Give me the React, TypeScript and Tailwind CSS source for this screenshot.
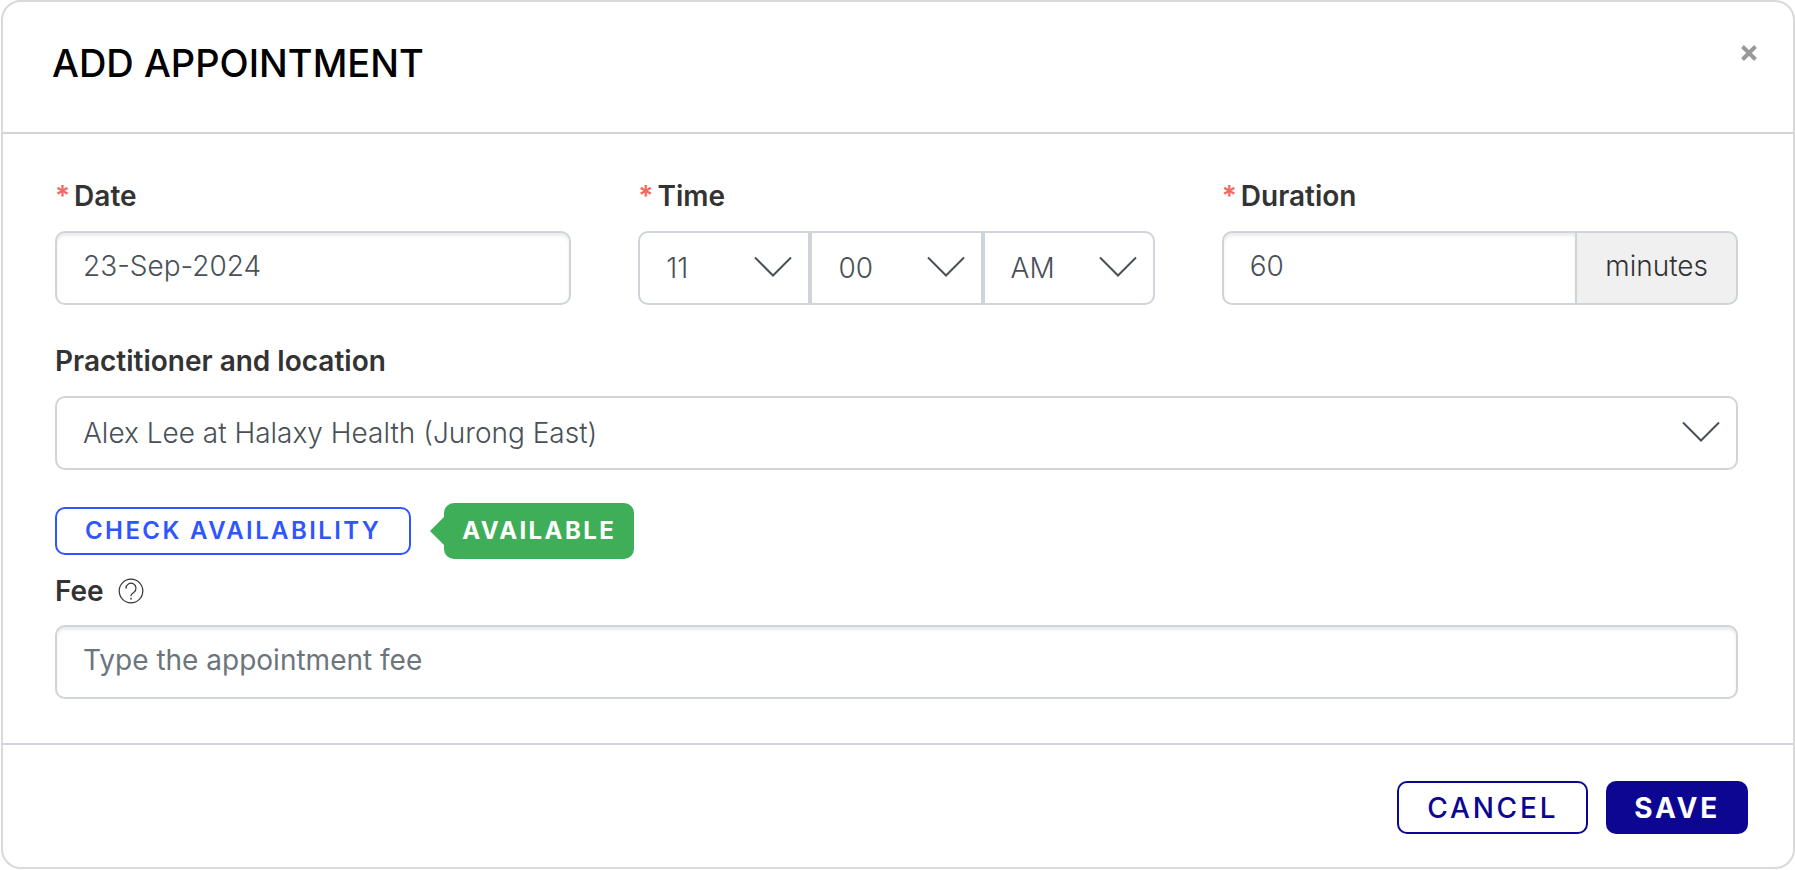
import type { ReactNode } from "react";
import { clsx } from "clsx";

interface LabelProps {
  htmlFor: string;
  required?: boolean;
  children: ReactNode;
}

function Label({ htmlFor, required, children }: LabelProps) {
  return (
    <label
      htmlFor={htmlFor}
      className="flex items-center gap-1 text-[28px] leading-9 font-semibold text-[#333]"
    >
      {required && <span className="text-[#f26a63]">*</span>}
      {children}
    </label>
  );
}

interface SelectProps {
  id?: string;
  label?: string;
  options: string[];
  className?: string;
}

function Select({ id, label, options, className }: SelectProps) {
  return (
    <div className="relative min-w-0 flex-1">
      <select
        id={id}
        aria-label={label}
        className={clsx(
          "h-[74px] w-full appearance-none border-2 border-[#ced4da] bg-white pr-16 pl-[26px] text-[28px] font-light text-[#495057]",
          className,
        )}
      >
        {options.map((option) => (
          <option key={option}>{option}</option>
        ))}
      </select>
      <svg
        viewBox="0 0 38 22"
        className="pointer-events-none absolute top-[25px] right-[18px] h-[22px] w-[38px]"
        fill="none"
        stroke="#495057"
        strokeWidth="2"
      >
        <path d="M1 1.500 19 19.500 37 1.500" />
      </svg>
    </div>
  );
}

const inputClass =
  "h-[74px] w-full min-w-0 border-2 border-[#ced4da] bg-white px-[26px] pb-1 text-[28px] font-light text-[#495057] shadow-[inset_0_3px_3px_rgba(0,0,0,0.08)] placeholder:font-normal placeholder:text-[#6c757d]";

export default function App() {
  return (
    <form
      className="ml-px rounded-[20px] border-2 border-[#d9d9d9] bg-white font-['Inter',sans-serif]"
      onSubmit={(e) => e.preventDefault()}
    >
      <header className="flex items-start justify-between border-b-2 border-[#ced4da] pt-[35px] pr-8 pb-[43px] pl-[49px]">
        <h1 className="text-[38px] leading-[52px] font-medium text-black">
          ADD APPOINTMENT
        </h1>
        <button type="button" aria-label="Close" className="p-1">
          <svg
            viewBox="0 0 16 16"
            className="mt-1 size-4"
            stroke="#999"
            strokeWidth="4"
          >
            <path d="M1.500 1.500 14.500 14.500M14.500 1.500 1.500 14.500" />
          </svg>
        </button>
      </header>

      <div className="flex flex-col pt-11 pr-[55px] pb-11 pl-[52px]">
        <div className="grid grid-cols-3 gap-[67px]">
          <div className="flex min-w-0 flex-col gap-[17px]">
            <Label htmlFor="date" required>
              Date
            </Label>
            <input
              id="date"
              defaultValue="23-Sep-2024"
              className={clsx(inputClass, "rounded-[10px]")}
            />
          </div>

          <div className="flex min-w-0 flex-col gap-[17px]">
            <Label htmlFor="hour" required>
              Time
            </Label>
            <div className="flex">
              <Select
                id="hour"
                options={["11", "12"]}
                className="rounded-l-[10px]"
              />
              <Select label="Minute" options={["00", "15", "30", "45"]} />
              <Select
                label="AM or PM"
                options={["AM", "PM"]}
                className="rounded-r-[10px]"
              />
            </div>
          </div>

          <div className="flex min-w-0 flex-col gap-[17px]">
            <Label htmlFor="duration" required>
              Duration
            </Label>
            <div className="flex">
              <input
                id="duration"
                defaultValue="60"
                className={clsx(inputClass, "flex-1 rounded-l-[10px]")}
              />
              <span className="flex items-center rounded-r-[10px] border-2 border-l-0 border-[#ced4da] bg-[#f0f0f0] px-7 pb-1 text-[28px] font-light text-[#333]">
                minutes
              </span>
            </div>
          </div>
        </div>

        <div className="mt-[38px] flex flex-col gap-[17px]">
          <Label htmlFor="practitioner">Practitioner and location</Label>
          <Select
            id="practitioner"
            options={["Alex Lee at Halaxy Health (Jurong East)"]}
            className="rounded-[10px]"
          />
        </div>

        <div className="mt-[33px] flex items-center gap-[19px]">
          <button
            type="button"
            className="h-12 rounded-[10px] border-2 border-[#2f55ff] px-7 text-[24px] font-semibold tracking-widest text-[#2f55ff]"
          >
            CHECK AVAILABILITY
          </button>
          <div className="flex items-center">
            <svg viewBox="0 0 14 28" className="h-7 w-3.5" fill="#3fae58">
              <path d="M14 0v28L0 14z" />
            </svg>
            <span className="flex h-14 items-center rounded-[10px] bg-[#3fae58] px-[18px] text-[24px] font-bold tracking-widest text-white">
              AVAILABLE
            </span>
          </div>
        </div>

        <div className="mt-3.5 flex flex-col gap-4">
          <div className="flex items-center gap-3.5">
            <Label htmlFor="fee">Fee</Label>
            <button type="button" aria-label="About the fee">
              <svg
                viewBox="0 0 26 26"
                className="size-[26px]"
                fill="none"
                stroke="#333"
                strokeWidth="1.2"
                strokeLinecap="round"
              >
                <circle cx="13" cy="13" r="11.800" />
                <path d="M8 10.200a5 5 0 1 1 7.900 4.100c-1.800 1.200-2.900 1.700-2.900 3.400" />
                <path d="M13 20.200v1" />
              </svg>
            </button>
          </div>
          <input
            id="fee"
            placeholder="Type the appointment fee"
            className={clsx(inputClass, "rounded-[10px]")}
          />
        </div>
      </div>

      <footer className="flex justify-end gap-[18px] border-t-2 border-[#ced4da] pt-9 pr-[45px] pb-[33px]">
        <button
          type="button"
          className="h-[53px] rounded-[10px] border-2 border-[#0d0693] px-7 text-[28px] font-medium tracking-widest text-[#0d0693]"
        >
          CANCEL
        </button>
        <button
          type="submit"
          className="h-[53px] rounded-[10px] bg-[#0d0693] px-7 text-[28px] font-bold tracking-widest text-white"
        >
          SAVE
        </button>
      </footer>
    </form>
  );
}
